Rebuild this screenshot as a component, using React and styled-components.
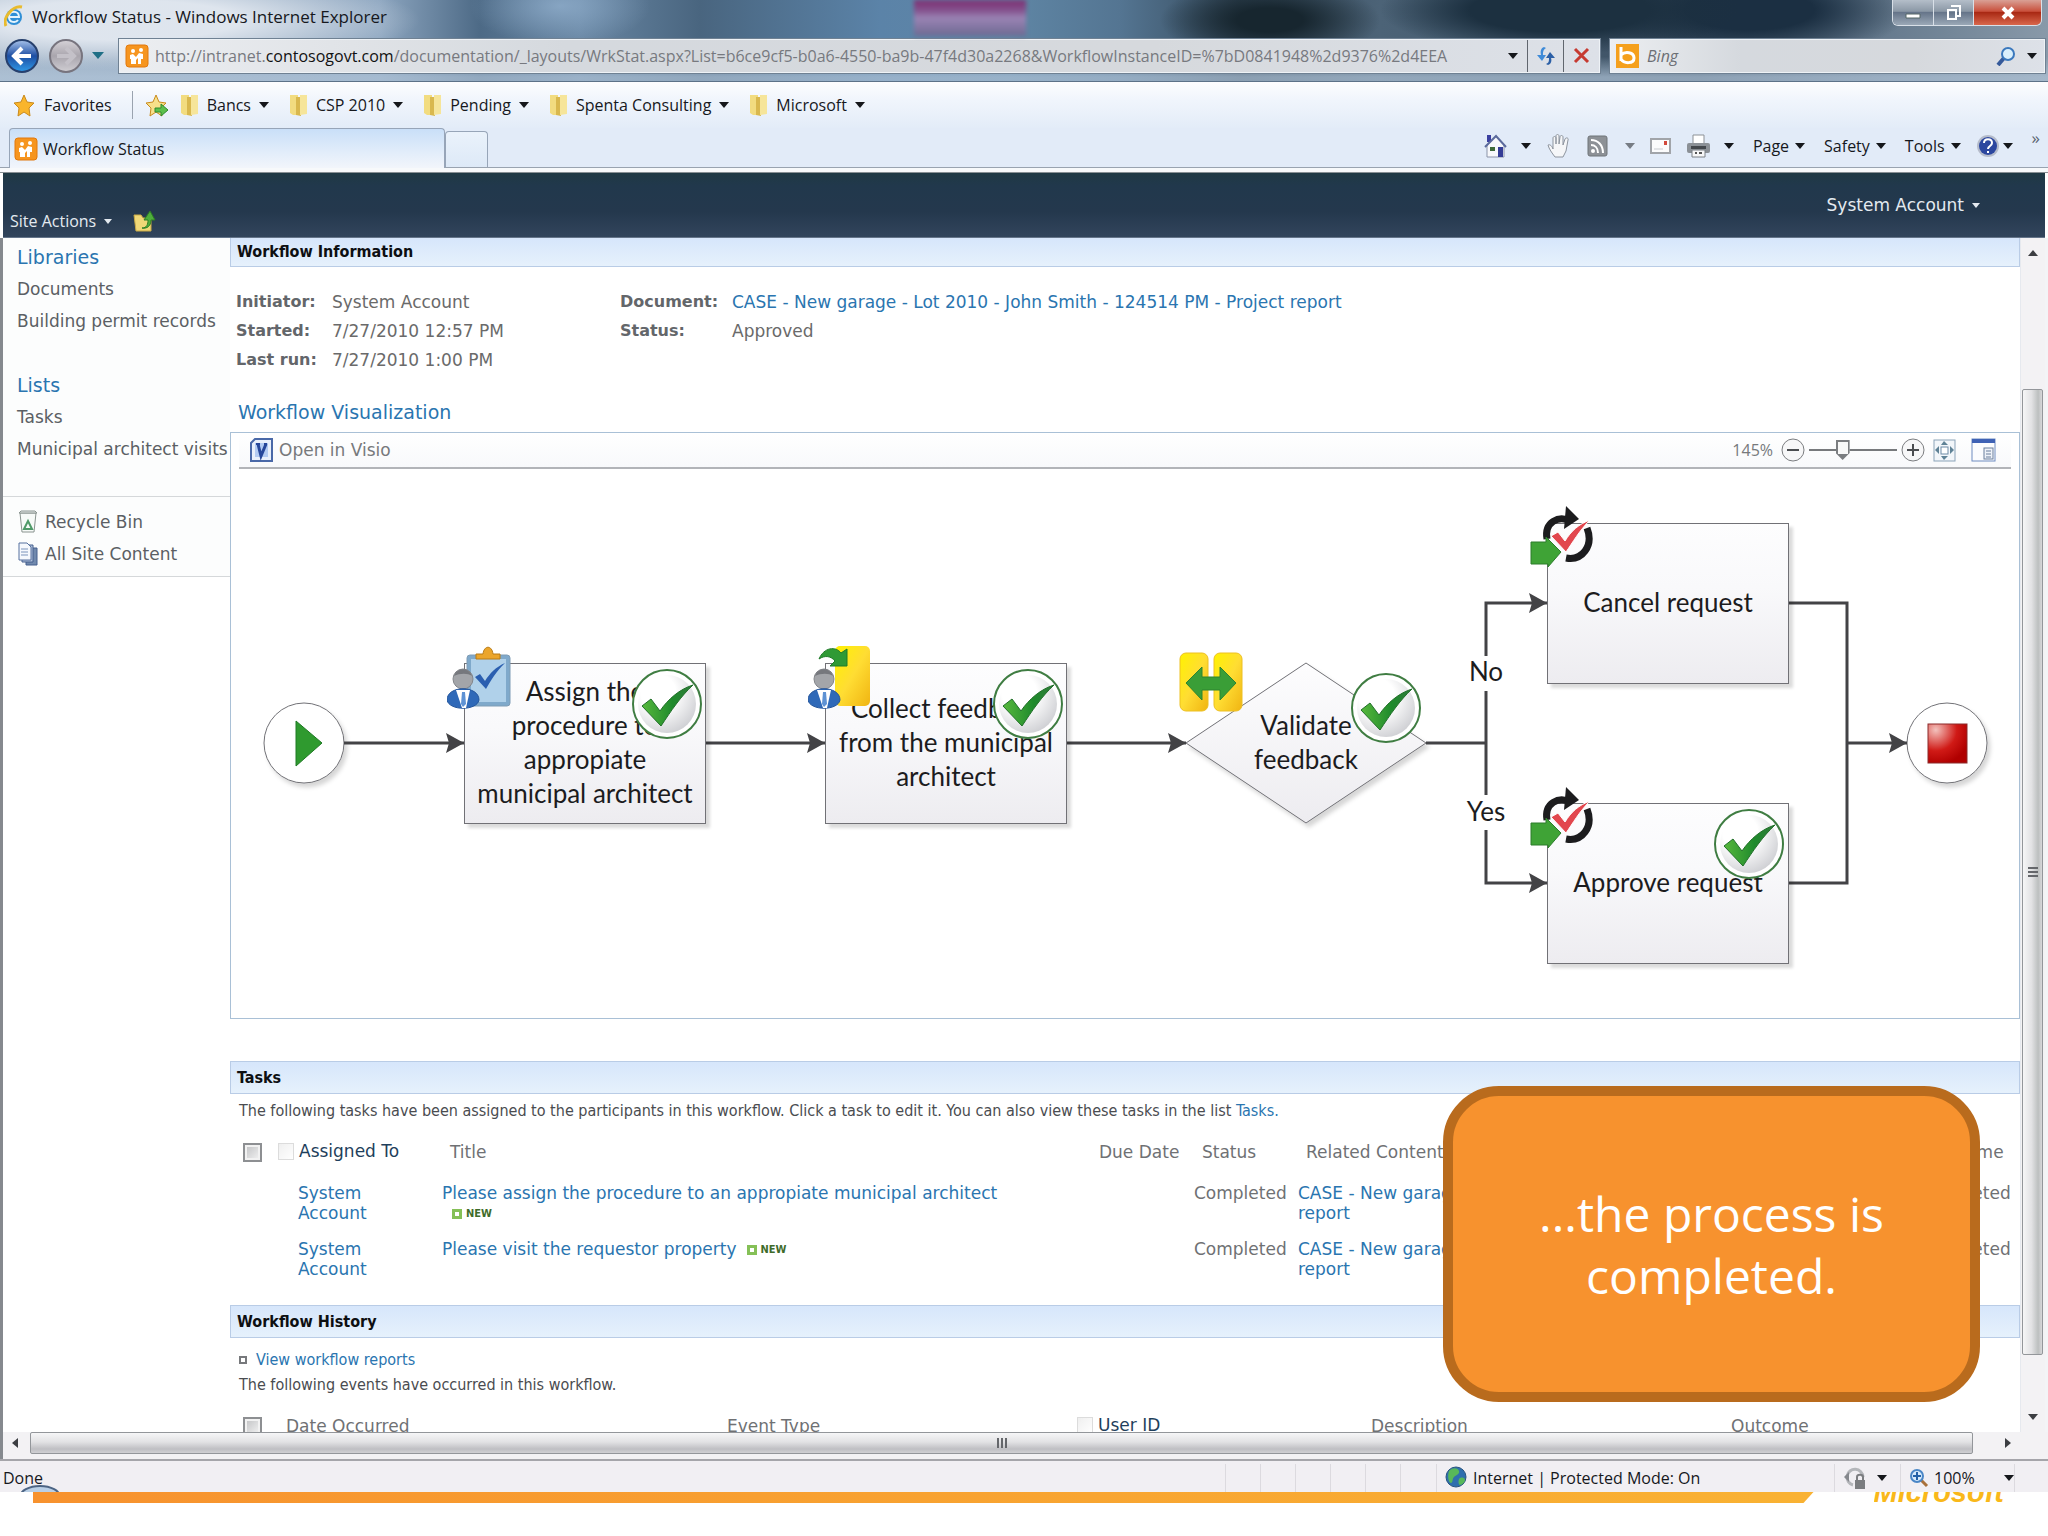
import React from 'react'
import styled, { createGlobalStyle } from 'styled-components'

const ui = '"Open Sans", "Noto Sans", sans-serif'
const page = '"DejaVu Sans", sans-serif'
const narrow = '"DejaVu Sans Condensed", "DejaVu Sans", sans-serif'

const GlobalStyle = createGlobalStyle`
*, *::before {
  box-sizing: border-box;
}
body {
  margin: 0;
  background: #fff;
}
button, input {
  font: inherit;
  color: inherit;
  margin: 0;
}
button {
  border: 0;
  padding: 0;
  background: none;
}
a {
  color: #2a75b0;
  text-decoration: none;
}
svg {
  display: block;
  flex: none;
}
`

const Screen = styled.div`
position: relative;
display: flex;
flex-direction: column;
height: 100vh;
min-width: 1600px;
overflow: hidden;
font-family: ${ui};
font-size: 16px;
color: #16181d;
white-space: nowrap;
`

/* ---------- window chrome ---------- */

const Glass = styled.div`
background:
  linear-gradient(rgba(255, 255, 255, 0) 70%, rgba(176, 196, 216, 0.7) 95%),
  radial-gradient(ellipse 300px 50px at 120px 20px, rgba(226, 232, 240, 0.95) 40%, rgba(190, 205, 222, 0) 100%),
  radial-gradient(ellipse 90px 40px at 560px 6px, rgba(150, 180, 210, 0.7), rgba(150, 180, 210, 0)),
  radial-gradient(ellipse 110px 40px at 1270px 20px, #17262f 30%, rgba(23, 38, 47, 0)),
  radial-gradient(ellipse 180px 44px at 1560px 10px, #1c3040 50%, rgba(28, 48, 64, 0)),
  radial-gradient(ellipse 160px 50px at 1750px 10px, #1b2f42 40%, rgba(27, 47, 66, 0)),
  linear-gradient(90deg, #a3b5c8, #8ca5bf 380px, #4d6a86 480px, #6886a3 580px, #49657f 700px, #5b83a8 880px, #5f86a5 1010px, #547592 1120px, #35495a 1240px, #4c6377 1380px, #3c5063 1700px, #5f7488 1850px, #8899a9);
border-bottom: 1px solid #5d7288;
`

const TitleBar = styled.header`
display: flex;
align-items: center;
gap: 8px;
height: 38px;
padding-left: 4px;
padding-bottom: 6px;
font-size: 17px;
`

const PurpleGhost = styled.span`
align-self: flex-start;
width: 112px;
height: 36px;
margin-left: auto;
margin-right: 42%;
background: linear-gradient(#7d2f72, #83508c 28%, #9a83b4 50%, #6d6a92);
filter: blur(2px);
`

const WindowButtons = styled.div`
align-self: flex-start;
display: flex;
margin-right: 6px;
border: 1px solid #d9e0e8;
border-top: 0;
border-radius: 0 0 6px 6px;
overflow: hidden;
`

const WindowButton = styled.button`
display: flex;
align-items: center;
justify-content: center;
width: ${p => (p.$close ? 68 : 40)}px;
height: 25px;
border-left: ${p => (p.$first ? 0 : 1)}px solid #d9e0e8;
background: ${p => p.$close
    ? 'linear-gradient(#d9a095, #c9503c 45%, #a92914 50%, #d8674c)'
    : 'linear-gradient(#b4bec9, #8b98a6 45%, #66758a 50%, #9aa8b6)'};
`

const AddressRow = styled.div`
display: flex;
align-items: center;
height: 43px;
padding: 0 3px 8px 4px;
`

const NavButtons = styled.div`
display: flex;
align-items: center;
gap: 8px;
width: 115px;
`

const FieldBox = styled.div`
display: flex;
align-items: center;
flex: ${p => p.$grow ? '1' : 'none'};
width: ${p => p.$grow ? 'auto' : '435px'};
height: 34px;
margin-right: ${p => p.$grow ? 10 : 0}px;
border: 1px solid #eef2f6;
outline: 1px solid #6f8193;
background: linear-gradient(90deg, #eceef1, #d5d9de 30%, #d6d9dd 70%, #dde1e8);
min-width: 0;
`

const AddressText = styled.div`
flex: 1;
min-width: 0;
overflow: hidden;
padding-left: 6px;
font-size: 16px;
line-height: 30px;
color: #77797f;
outline: 0;
b {
  font-weight: 400;
  color: #111;
}
`

const FieldIcon = styled.span`
padding-left: 5px;
`

const FieldButton = styled.button`
display: flex;
align-items: center;
justify-content: center;
width: ${p => p.$width || 36}px;
height: 32px;
border-left: ${p => (p.$line ? 1 : 0)}px solid #60666e;
`

const SearchInput = styled.input`
flex: 1;
min-width: 0;
border: 0;
outline: 0;
padding: 0 8px;
background: none;
font-style: italic;
&::placeholder {
  color: #6c6f75;
  opacity: 1;
}
`

const Caret = styled.span`
display: inline-block;
flex: none;
width: 0;
height: 0;
border: ${p => p.$size || 5}px solid transparent;
border-top: ${p => (p.$size || 5) + 1}px solid ${p => p.$color || '#15171b'};
border-bottom: 0;
`

const FavoritesBar = styled.nav`
display: flex;
align-items: center;
height: 46px;
padding-left: 12px;
background: linear-gradient(#fdfdfe, #f0f5fc 40%, #e3ecf8);
`

const FavButton = styled.button`
display: flex;
align-items: center;
gap: 8px;
margin-right: 20px;
`

const Divider = styled.span`
width: 1px;
height: 28px;
margin-right: 11px;
background: #9aa3af;
`

const AddFavorite = styled.button`
margin-right: 12px;
`

const TabRow = styled.div`
display: flex;
align-items: flex-end;
height: 40px;
padding-left: 9px;
background: #e2ebf8;
border-bottom: 1px solid #99a3b0;
`

const Tab = styled.button`
display: flex;
align-items: center;
gap: 5px;
width: 436px;
height: 40px;
margin-bottom: -1px;
padding-left: 4px;
border: 1px solid #97a5b8;
border-bottom: 0;
border-radius: 4px 4px 0 0;
background: linear-gradient(#c9dff8, #e2edfa 60%, #f2f5fb);
`

const NewTab = styled.button`
width: 43px;
height: 36px;
border: 1px solid #97a5b8;
border-bottom: 0;
border-radius: 4px 4px 0 0;
background: linear-gradient(#eaf2fb, #dde9f7);
`

const CommandBar = styled.div`
display: flex;
align-items: center;
gap: 15px;
height: 40px;
margin-left: auto;
padding-right: 8px;
padding-bottom: 3px;
`

const Command = styled.button`
display: flex;
align-items: center;
gap: ${p => p.$gap || 6}px;
margin-left: ${p => (p.$text ? 4 : 0)}px;
`

const More = styled.button`
align-self: flex-start;
margin-left: 4px;
font-size: 17px;
line-height: 22px;
color: #5a6470;
`

const Strip = styled.div`
height: 5px;
background: #f7f9fb;
border-bottom: 1px solid #888f94;
`

/* ---------- site ---------- */

const SiteHeader = styled.header`
display: flex;
justify-content: space-between;
height: 65px;
margin: 0 3px;
background: linear-gradient(#1f3944, #21384c 20%, #24384d 60%, #32455c);
border-bottom: 1px solid #65758a;
color: #e4eaf0;
`

const SiteActions = styled.div`
display: flex;
align-items: center;
align-self: flex-end;
gap: 20px;
padding: 0 0 5px 7px;
`

const HeaderButton = styled.button`
display: flex;
align-items: center;
gap: 8px;
font-family: ${p => (p.$page ? page : ui)};
font-size: ${p => (p.$page ? 17 : 16)}px;
margin-right: ${p => (p.$page ? 65 : 0)}px;
`

const Body = styled.div`
display: flex;
flex: 1;
min-height: 0;
border-left: 3px solid #85898e;
border-right: 3px solid #f3f4f6;
font-family: ${page};
font-size: 17px;
`

const SideNav = styled.nav`
flex: none;
width: 227px;
color: #5b5f64;
line-height: 32px;
a {
  display: flex;
  align-items: center;
  gap: 6px;
  color: inherit;
}
`

const NavGroup = styled.ul`
margin: 0;
padding: ${p => p.$top || 0}px 0 ${p => p.$bottom}px 14px;
list-style: none;
border-bottom: ${p => (p.$line ? 1 : 0)}px solid #d5d8da;
background: #fcfdfd;
`

const NavHeading = styled.li`
font-size: 19px;
a {
  color: #2a75b0;
}
`

const Main = styled.main`
flex: 1;
min-width: 0;
overflow: hidden;
`

const SectionBar = styled.h2`
margin: 0;
height: ${p => (p.$top ? 29 : 33)}px;
padding-left: 6px;
border: 1px solid #b9cce6;
border-top-width: ${p => (p.$top ? 0 : 1)}px;
background: linear-gradient(#d6e6fb, #e6f1fc);
font-family: ${narrow};
font-size: 16px;
line-height: ${p => (p.$top ? 27 : 32)}px;
color: #0d0f12;
`

const Facts = styled.div`
display: grid;
grid-template-columns: 96px 288px 112px 1fr;
grid-auto-rows: 29px;
align-items: center;
padding: 20px 0 25px 6px;
color: #6a6a6a;
b {
  font-size: 16px;
  color: #63666a;
}
`

const VizTitle = styled.h3`
margin: 0;
padding-left: 8px;
height: 33px;
font-size: 19px;
font-weight: 400;
line-height: 26px;
color: #2a75b0;
`

const VizPanel = styled.section`
height: 587px;
margin-bottom: 42px;
border: 1px solid #a9c0d6;
`

const VizBar = styled.div`
display: flex;
align-items: center;
height: 36px;
margin: 0 8px;
padding: 0 15px 0 11px;
border-bottom: 2px solid #b2b4b8;
background: linear-gradient(#fff, #f8f9fb);
color: #77797c;
`

const VisioLink = styled.a`
display: flex;
align-items: center;
gap: 6px;
margin-right: auto;
color: inherit;
`

const ZoomText = styled.label`
margin-right: 8px;
font-family: ${ui};
font-size: 16px;
`

const IconButton = styled.button`
margin-left: ${p => p.$left || 0}px;
`

const ZoomSlider = styled.input`
appearance: none;
width: 88px;
height: 24px;
margin: 0 4px;
background: linear-gradient(#77797c, #77797c) center / 100% 2px no-repeat;
&::-webkit-slider-thumb {
  appearance: none;
  width: 14px;
  height: 20px;
  border: 2px solid #7b7d80;
  border-bottom-width: 6px;
  background: #f8f8f8;
  clip-path: polygon(0 0, 100% 0, 100% 65%, 50% 100%, 0 65%);
}
`

/* the diagram is a free canvas: every node has its own x and y */
const Canvas = styled.div`
position: relative;
width: 1787px;
height: 548px;
font-family: Lato, sans-serif;
font-size: 26px;
line-height: 34px;
color: #1c1c1e;
text-align: center;
white-space: pre-line;
`

const Lines = styled.svg`
position: absolute;
left: 0;
top: 0;
`

const Node = styled.div`
position: absolute;
left: ${p => p.$x}px;
top: ${p => p.$y}px;
display: flex;
align-items: center;
justify-content: center;
width: 242px;
height: 161px;
padding-bottom: 4px;
border: ${p => (p.$plain ? 0 : 1)}px solid #717176;
background: ${p => (p.$plain ? 'none' : 'linear-gradient(#fdfdfe, #f9f9fb 40%, #edecf0)')};
box-shadow: ${p => (p.$plain ? 'none' : '4px 4px 3px rgba(0, 0, 0, 0.14)')};
`

const Pin = styled.div`
position: absolute;
left: ${p => p.$x}px;
top: ${p => p.$y}px;
`

const BranchLabel = styled.div`
position: absolute;
left: ${p => p.$x}px;
top: ${p => p.$y}px;
width: 60px;
`

const Note = styled.p`
margin: 0;
padding: 0 0 ${p => (p.$tight ? 4 : 0)}px 9px;
font-family: ${narrow};
font-size: 16px;
line-height: ${p => (p.$tight ? 26 : 34)}px;
color: #4a4c50;
`

const Table = styled.table`
width: 100%;
table-layout: fixed;
border-collapse: collapse;
color: #6f7174;
line-height: 20px;
text-align: left;
th {
  height: 48px;
  padding: 0 0 0 8px;
  font-weight: 400;
  vertical-align: middle;
}
td {
  height: 56px;
  padding: 7px 0 0;
  vertical-align: top;
}
`

const TaskTable = styled(Table)`
margin-bottom: 17px;
`

const PersonHead = styled.span`
display: flex;
align-items: center;
gap: 5px;
margin-left: -8px;
padding-bottom: 2px;
color: #1f3f5c;
`

const Ghost = styled.span`
width: 16px;
height: 17px;
border: 1px solid #dcdcdc;
background: linear-gradient(135deg, #efefef, #fff);
`

const Person = styled.a`
display: block;
width: 80px;
margin-left: 20px;
white-space: normal;
`

const Related = styled.a`
display: block;
padding-right: 26px;
white-space: normal;
`

const Tick = styled.input`
appearance: none;
display: block;
width: 19px;
height: 19px;
margin: 0 0 0 5px;
border: 2px solid #8d8f92;
background: linear-gradient(135deg, #bfc0c2, #f4f4f4);
box-shadow: inset 0 0 0 2px #f2f2f2;
`

const NewFlag = styled.span`
display: inline-flex;
align-items: center;
gap: 4px;
margin-left: 10px;
font-family: ${narrow};
font-size: 11px;
font-weight: 700;
line-height: 16px;
color: #3f6b2a;
&::before {
  content: '';
  width: 10px;
  height: 10px;
  border: 3px solid #85c057;
  background: #fff;
}
`

const Reports = styled.a`
display: flex;
align-items: center;
gap: 9px;
padding: 10px 0 0 9px;
font-family: ${narrow};
font-size: 16px;
line-height: 24px;
&::before {
  content: '';
  width: 8px;
  height: 8px;
  border: 2px solid #77797c;
}
`

/* ---------- scroll bars and status ---------- */

const VScroll = styled.div`
display: flex;
flex-direction: column;
align-items: center;
width: 25px;
padding: 12px 2px 12px 1px;
background: #f3f2f4;
border-left: 1px solid #e6e9ee;
`

const VThumb = styled.div`
display: flex;
align-items: center;
justify-content: center;
width: 21px;
height: 966px;
margin: 133px 0 auto;
border: 1px solid #93969a;
border-radius: 2px;
background: linear-gradient(90deg, #f6f6f7, #e2e2e4 45%, #bcbfbf 80%, #d8d8da);
`

const HScroll = styled.div`
display: flex;
align-items: center;
height: 27px;
padding: 0 37px 5px 9px;
border-left: 3px solid #85898e;
background: #f3f2f4;
`

const HThumb = styled.div`
display: flex;
align-items: center;
justify-content: center;
flex: 1;
height: 22px;
margin: 0 32px 0 12px;
border: 1px solid #93969a;
border-radius: 2px;
background: linear-gradient(#f6f6f7, #e2e2e4 45%, #bfbfc3 80%, #d0d0d3);
`

const Arrow = styled.button`
flex: none;
width: 0;
height: 0;
border: 5px solid transparent;
border-${p => p.$side}: 6px solid #3c3e42;
border-${p => ({ top: 'bottom', bottom: 'top', left: 'right', right: 'left' }[p.$side])}: 0;
`

const StatusBar = styled.footer`
position: relative;
display: flex;
align-items: center;
height: 33px;
padding: 2px 0 0 3px;
border-top: 2px solid #a5a5aa;
background: #f1eff3;
`

const StatusCell = styled.span`
display: flex;
align-items: center;
gap: ${p => p.$gap || 5}px;
width: ${p => p.$width}px;
height: 28px;
padding-left: 8px;
border-left: 1px solid #dcdadf;
`

const StatusText = styled.span`
flex: 1;
`

const ZoomLevel = styled.span`
flex: 1;
`

const OrbEdge = styled.svg`
position: absolute;
left: 21px;
bottom: 0;
`

const SlideFoot = styled.div`
display: flex;
align-items: flex-start;
height: 44px;
padding: 0 44px 0 33px;
background: #fff;
`

const OrangeRule = styled.div`
flex: 1;
height: 11px;
margin-right: 60px;
background: linear-gradient(90deg, #f7922e, #f9b233);
clip-path: polygon(0 0, 100% 0, calc(100% - 10px) 100%, 0 100%);
`

const Brand = styled.span`
display: flex;
align-items: flex-end;
height: 11px;
overflow: hidden;
font-family: "Liberation Sans", sans-serif;
font-size: 29px;
font-style: italic;
font-weight: 700;
line-height: 22px;
color: #f9b81a;
`

const Callout = styled.aside`
position: absolute;
right: 68px;
bottom: 134px;
display: flex;
align-items: center;
justify-content: center;
width: 537px;
height: 316px;
padding-top: 2px;
border: 10px solid #b96b1d;
border-radius: 56px;
background: #f7922e;
font-size: 48px;
line-height: 62px;
color: #fff;
text-align: center;
white-space: pre-line;
`

/* ---------- icons ---------- */

const IeIcon = () => (
  <svg width="20" height="24" viewBox="0 0 20 24">
    <circle cx="10" cy="13" r="8" fill="#2f8fd6" />
    <path d="M5 13h10c0-7-10-7-10 0c0 6 7 6 9 3" fill="none" stroke="#e4f4fd" strokeWidth="2" />
    <path d="M2 22C-2 14 9 1 18 3" fill="none" stroke="#e8bb2e" strokeWidth="3" />
  </svg>
)

const SiteIcon = () => (
  <svg width="24" height="24" viewBox="0 0 24 24">
    <rect x="1" y="1" width="22" height="22" rx="3" fill="#f6951f" stroke="#e2790c" />
    <g fill="#fff">
      <circle cx="8" cy="7" r="2" />
      <circle cx="16" cy="6" r="2" />
      <path d="M5 11l3-1 3 3 3-4 4 1v5l-2 0v5h-3v-6l-2 2v4H6v-5H5z" />
    </g>
  </svg>
)

const RoundArrow = ({ back }) => (
  <svg width="36" height="36" viewBox="0 0 36 36">
    <defs>
      <linearGradient id={back ? 'bk' : 'fw'} x1="0" y1="0" x2="0" y2="1">
        <stop offset="0" stopColor={back ? '#a9c4ec' : '#d6d3d8'} />
        <stop offset="0.5" stopColor={back ? '#1d4ea3' : '#a9a5ad'} />
        <stop offset="1" stopColor={back ? '#2f9be8' : '#d0ced3'} />
      </linearGradient>
    </defs>
    <circle cx="18" cy="18" r="16" fill={`url(#${back ? 'bk' : 'fw'})`} stroke={back ? '#27406d' : '#77747e'} strokeWidth="2" />
    <path
      d={back ? 'M27 18H11M18 10l-8 8 8 8' : 'M9 18h16M18 10l8 8-8 8'}
      fill="none"
      stroke={back ? '#fff' : '#c4c1c8'}
      strokeWidth="4"
    />
  </svg>
)

const Star = ({ add }) => (
  <svg width="24" height="24" viewBox="0 0 24 24">
    <path d="M12 2l3 7 7 1-5 5 1 8-6-4-6 4 1-8-5-5 7-1z" fill={add ? '#f7e08a' : '#f9b52c'} stroke="#c98a1c" />
    {add && <path d="M11 15h6v-4l7 6-7 6v-4h-6z" fill="#5cc04c" stroke="#2e8a2c" />}
  </svg>
)

const Folder = () => (
  <svg width="19" height="24" viewBox="0 0 19 24">
    <path d="M1 2h8v20H4l-3-2z" fill="#f2dc80" />
    <path d="M7 4h5v19l-5-1z" fill="#d9b84e" />
    <path d="M11 2h7v19l-7 1z" fill="#f6e59a" />
  </svg>
)

const HomeIcon = () => (
  <svg width="25" height="26" viewBox="0 0 25 26">
    <path d="M4 2h4v7H4z" fill="#3a3fa0" />
    <path d="M4 12l9-9 8 9v12H4z" fill="#f7f8fb" stroke="#8b93a8" />
    <path d="M2 14L13 3l10 11" fill="none" stroke="#5b6a9c" strokeWidth="2" />
    <path d="M7 14h5v4H7z" fill="#3f6a3a" />
    <path d="M15 14h5v10h-5z" fill="#343c96" />
  </svg>
)

const HandIcon = () => (
  <svg width="26" height="26" viewBox="0 0 26 26">
    <path d="M9 24C6 20 3 16 2 12c2-1 4 1 5 4V5c0-2 3-2 3 0v6V3c0-2 3-2 3 0v8l1-7c0-2 3-2 3 0v8l2-6c1-2 4-1 3 1l-2 11-3 6z" fill="#f5f6f8" stroke="#8d949e" />
  </svg>
)

const FeedIcon = () => (
  <svg width="21" height="22" viewBox="0 0 21 22">
    <rect x="1" y="1" width="19" height="20" rx="2" fill="#8d9196" stroke="#6f7479" />
    <circle cx="6" cy="16" r="2" fill="#fff" />
    <path d="M4 10c4 0 7 3 7 8M4 5c7 0 12 5 12 13" fill="none" stroke="#fff" strokeWidth="2" />
  </svg>
)

const MailIcon = () => (
  <svg width="21" height="16" viewBox="0 0 21 16">
    <rect x="1" y="1" width="19" height="14" fill="#fbfbfc" stroke="#a1a4a9" strokeWidth="2" />
    <path d="M14 3h3v4h-3z" fill="#d2493d" />
    <path d="M4 11h9" stroke="#c9ccd1" />
  </svg>
)

const PrinterIcon = () => (
  <svg width="25" height="24" viewBox="0 0 25 24">
    <path d="M7 1h11v9H7z" fill="#fff" stroke="#8d9196" />
    <rect x="1" y="9" width="23" height="10" rx="2" fill="#8b9096" />
    <path d="M5 12h15v3H5z" fill="#43474c" />
    <path d="M6 16h13v7H6z" fill="#f7f7f8" stroke="#7b8086" />
    <path d="M9 19h2M13 19h3" stroke="#555" strokeWidth="2" />
  </svg>
)

const HelpIcon = () => (
  <svg width="24" height="24" viewBox="0 0 24 24">
    <circle cx="12" cy="12" r="11" fill="#b5bccb" />
    <circle cx="12" cy="12" r="9" fill="#2c479f" />
    <path d="M8 9c0-5 8-5 8 0 0 3-4 3-4 6M12 17v2" fill="none" stroke="#fff" strokeWidth="2" />
  </svg>
)

const RefreshIcon = () => (
  <svg width="22" height="22" viewBox="0 0 22 22">
    <path d="M9 2C6 3 5 6 6 10H2l5 6 4-6H8c0-3 0-5 3-7z" fill="#3f8bd8" />
    <path d="M13 20c3-1 4-4 3-7h4l-5-6-4 6h3c0 3 0 5-3 6z" fill="#2b5fa6" />
  </svg>
)

const StopIcon = () => (
  <svg width="17" height="17" viewBox="0 0 17 17">
    <path d="M2 2l13 13M15 2L2 15" stroke="#c63a31" strokeWidth="3" />
  </svg>
)

const BingIcon = () => (
  <svg width="23" height="24" viewBox="0 0 23 24">
    <rect width="23" height="24" fill="#f5a01c" />
    <path d="M5 3v14M5 11c4-4 13-3 13 3s-10 6-13 1" fill="none" stroke="#fff" strokeWidth="3" />
  </svg>
)

const SearchIcon = ({ plus }) => (
  <svg width="20" height="20" viewBox="0 0 20 20">
    {plus
      ? <>
          <path d="M12 12l6 6" stroke="#a9713a" strokeWidth="3" />
          <circle cx="8" cy="8" r="6" fill="#d6eafc" stroke="#4a86c6" strokeWidth="2" />
          <path d="M8 4v8M4 8h8" stroke="#2461a8" strokeWidth="2" />
        </>
      : <>
          <path d="M8 12l-6 7" stroke="#35599a" strokeWidth="4" />
          <circle cx="12" cy="8" r="6" fill="#d9effc" stroke="#3a78bd" strokeWidth="2" />
        </>}
  </svg>
)

const UpFolderIcon = () => (
  <svg width="24" height="22" viewBox="0 0 24 22">
    <path d="M2 5h7l2 3h8v13H4z" fill="#f0d877" stroke="#c9a944" />
    <path d="M10 18c5 0 6-4 6-8h-4l6-9 5 9h-4c0 6-4 9-9 8z" fill="#4fae3b" stroke="#2d7d24" />
  </svg>
)

const BinIcon = () => (
  <svg width="22" height="24" viewBox="-1 0 22 24">
    <path d="M2 3l16 0-2 19H4z" fill="#f7faf8" stroke="#8a9490" />
    <path d="M1 3l2-2h14l2 2z" fill="#e5e9e8" stroke="#8a9490" />
    <path d="M10 11l4 8H6z" fill="none" stroke="#4f9a68" strokeWidth="2" />
  </svg>
)

const PagesIcon = () => (
  <svg width="22" height="24" viewBox="-1 0 22 24">
    <path d="M8 6h11v17H8z" fill="#7089ad" stroke="#445f8d" />
    <path d="M4 3h11v17H4z" fill="#aebfd9" stroke="#445f8d" />
    <path d="M1 1h8l4 4v13H1z" fill="#f5f8fd" stroke="#56719f" />
    <path d="M3 7h7M3 10h7M3 13h7" stroke="#7b93bb" />
  </svg>
)

const VisioIcon = () => (
  <svg width="23" height="24" viewBox="0 0 23 24">
    <path d="M5 1h17v22H1V5z" fill="#e9f0fb" stroke="#4a69a8" strokeWidth="2" />
    <path d="M5 5h13v14H5z" fill="#b3cbf2" />
    <path d="M6 6h4M14 6h3" stroke="#26479a" strokeWidth="2" />
    <path d="M8 6l3 12 5-12" fill="none" stroke="#26479a" strokeWidth="3" />
  </svg>
)

const RoundSign = ({ plus }) => (
  <svg width="24" height="24" viewBox="0 0 24 24">
    <circle cx="12" cy="12" r="11" fill="#f7f7f8" stroke="#7b7d80" />
    <path d={plus ? 'M6 12h12M12 6v12' : 'M6 12h12'} stroke="#4b4d50" strokeWidth="2" />
  </svg>
)

const FitIcon = () => (
  <svg width="23" height="23" viewBox="0 0 23 23">
    <rect x="1" y="1" width="21" height="21" fill="#f2f6fa" stroke="#8ba3b8" />
    <rect x="8" y="8" width="7" height="7" fill="#fff" stroke="#6c8aa5" />
    <path d="M11 2l4 4H8zM11 21l4-4H8zM2 11l4-4v8zM21 11l-4-4v8z" fill="#5f8296" />
  </svg>
)

const PaneIcon = () => (
  <svg width="25" height="24" viewBox="0 0 25 24">
    <rect x="1" y="1" width="23" height="22" fill="#fbfcfe" stroke="#6f8cc0" />
    <path d="M1 1h23v4H1z" fill="#3f62b5" />
    <rect x="13" y="10" width="9" height="11" fill="#eef2f8" stroke="#6b7f9c" />
    <path d="M15 13h5M15 16h5M15 19h5" stroke="#6b7f9c" />
  </svg>
)

const DoneBadge = () => (
  <svg width="70" height="70" viewBox="0 0 70 70">
    <defs>
      <radialGradient id="ball" cx="0.35" cy="0.3" r="0.75">
        <stop offset="0.4" stopColor="#fff" />
        <stop offset="1" stopColor="#cfd0d4" />
      </radialGradient>
      <linearGradient id="leaf" x1="0" y1="0" x2="1" y2="0">
        <stop offset="0" stopColor="#57b83c" />
        <stop offset="0.6" stopColor="#1f8a2c" />
        <stop offset="1" stopColor="#2f7a3a" />
      </linearGradient>
    </defs>
    <circle cx="35" cy="35" r="34" fill="#fff" stroke="#3f7d42" strokeWidth="2" />
    <circle cx="35" cy="35" r="29" fill="url(#ball)" />
    <path d="M10 37L19 30L28 42C36 30 48 20 61 16C49 27 39 42 29 57Z" fill="url(#leaf)" stroke="#22702a" />
  </svg>
)

const Man = () => (
  <>
    <circle cx="16" cy="34" r="10" fill="#a3a5a9" stroke="#83858a" />
    <path d="M7 31c3-9 15-9 18 0-4-3-12-3-18 0z" fill="#76787d" />
    <path d="M0 55c0-15 32-15 32 0-2 11-30 11-32 0z" fill="#2f69b8" stroke="#23559c" />
    <path d="M9 45h14l-4 18h-4z" fill="#fff" />
    <path d="M15 47h3l1 12-3 3-2-3z" fill="#5e92d4" />
  </>
)

const AssignIcon = () => (
  <svg width="64" height="64" viewBox="0 0 64 64">
    <rect x="20" y="10" width="43" height="51" rx="3" fill="#7fa9cb" stroke="#7f9cb5" />
    <path d="M24 14h35v43H24z" fill="#b0d1ea" />
    <path d="M29 14v-5h7c1-9 9-9 10 0h7v5z" fill="#eba52b" stroke="#b87b16" />
    <path d="M28 32l5-3 5 7C43 28 49 22 58 18 49 27 44 35 39 44z" fill="#2b5fb0" />
    <Man />
  </svg>
)

const CollectIcon = () => (
  <svg width="64" height="64" viewBox="0 0 64 64">
    <defs>
      <linearGradient id="gold" x1="0" y1="0" x2="1" y2="1">
        <stop offset="0" stopColor="#fff200" />
        <stop offset="0.5" stopColor="#ffdd33" />
        <stop offset="1" stopColor="#f0b412" />
      </linearGradient>
    </defs>
    <rect x="27" y="1" width="35" height="60" rx="5" fill="url(#gold)" />
    <path d="M11 14C16 2 28 1 33 8l6-4v17H22l5-5c-4-5-10-6-16-2z" fill="#2f9a35" stroke="#1e7a28" />
    <Man />
  </svg>
)

const CompareIcon = () => (
  <svg width="64" height="60" viewBox="0 0 64 60">
    <rect x="1" y="1" width="28" height="58" rx="6" fill="url(#gold)" stroke="#edc022" />
    <rect x="35" y="1" width="28" height="58" rx="6" fill="url(#gold)" stroke="#edc022" />
    <path d="M7 31l16-16v10h18V15l16 16-16 17V38H23v10z" fill="#3a9e37" stroke="#2c8430" />
  </svg>
)

const DecideIcon = () => (
  <svg width="64" height="62" viewBox="0 0 64 62">
    <path d="M17 33C14 16 29 9 40 15" fill="none" stroke="#1c1c1e" strokeWidth="7" />
    <path d="M36 0l13 13-15 10z" fill="#1c1c1e" />
    <path d="M57 22C64 40 52 55 36 52" fill="none" stroke="#1c1c1e" strokeWidth="7" />
    <path d="M21 30l7-4 7 9C41 25 49 18 60 14 49 25 43 36 36 46z" fill="#e2474e" stroke="#fff" />
    <path d="M1 36h15v-5l15 15-13 15v-3H1z" fill="#3fa336" stroke="#2c7d2a" />
  </svg>
)

const GlobeIcon = () => (
  <svg width="23" height="23" viewBox="0 0 23 23">
    <circle cx="11" cy="11" r="10" fill="#2f6fae" stroke="#28547f" />
    <path d="M4 5c4-4 9-3 10 0s-3 4-5 6-1 6-3 6-4-6-2-12zM15 12c3-1 5 0 5 2s-3 5-5 5-2-6 0-7z" fill="#58b85a" />
  </svg>
)

const LockIcon = () => (
  <svg width="24" height="24" viewBox="0 0 24 24">
    <path d="M20 11A8 8 0 1 0 10 19" fill="none" stroke="#b4b6ba" strokeWidth="3" />
    <path d="M1 11l5-5v10z" fill="#85888d" />
    <rect x="12" y="14" width="10" height="9" fill="#7b7d80" />
    <path d="M14 14v-3c0-3 6-3 6 0v3" fill="none" stroke="#7b7d80" strokeWidth="2" />
  </svg>
)

const Grip = ({ vertical }) => (
  <svg width="12" height="12" viewBox="0 0 12 12">
    <path d={vertical ? 'M1 2h10M1 6h10M1 10h10' : 'M2 1v10M6 1v10M10 1v10'} stroke="#65676b" strokeWidth="2" />
  </svg>
)

const FlowLines = () => (
  <Lines width="1787" height="548" viewBox="0 0 1787 548">
    <defs>
      <marker id="tip" markerUnits="userSpaceOnUse" markerWidth="20" markerHeight="20" refX="18" refY="10" orient="auto">
        <path d="M0 0L18 10L0 20L3 10Z" fill="#434346" />
      </marker>
      <linearGradient id="pane" x1="0" y1="0" x2="0" y2="1">
        <stop offset="0" stopColor="#fdfdfe" />
        <stop offset="1" stopColor="#edecf0" />
      </linearGradient>
      <radialGradient id="ruby" cx="0.2" cy="0.15" r="0.9">
        <stop offset="0" stopColor="#f3c2bd" />
        <stop offset="0.6" stopColor="#d01a16" />
        <stop offset="1" stopColor="#b00000" />
      </radialGradient>
      <filter id="soft">
        <feDropShadow dx="3" dy="4" stdDeviation="2" floodOpacity="0.16" />
      </filter>
    </defs>
    <g filter="url(#soft)" stroke="#717176">
      <circle cx="73" cy="274" r="40" fill="#fff" />
      <circle cx="1716" cy="274" r="40" fill="#fff" />
      <path d="M955 274L1075 194L1195 274L1075 354Z" fill="url(#pane)" />
    </g>
    <path d="M65 252L91 274L65 297Z" fill="#2f9a2f" stroke="#1f7a24" />
    <rect x="1697" y="255" width="39" height="39" fill="url(#ruby)" stroke="#8b2a2a" />
    <g fill="none" stroke="#434346" strokeWidth="3">
      <path d="M113 274H233" markerEnd="url(#tip)" />
      <path d="M475 274H594" markerEnd="url(#tip)" />
      <path d="M836 274H955" markerEnd="url(#tip)" />
      <path d="M1195 274H1255" />
      <path d="M1255 187V134H1316" markerEnd="url(#tip)" />
      <path d="M1255 222V326" />
      <path d="M1255 361V414H1316" markerEnd="url(#tip)" />
      <path d="M1556 134H1616V414H1556" />
      <path d="M1616 274H1676" markerEnd="url(#tip)" />
    </g>
  </Lines>
)

/* ---------- data ---------- */

const favorites = ['Bancs', 'CSP 2010', 'Pending', 'Spenta Consulting', 'Microsoft']
const caseName = 'CASE - New garage - Lot 2010 - John Smith - 124514 PM - Project report'
const tasks = [
  { title: 'Please assign the procedure to an appropiate municipal architect', wrap: true },
  { title: 'Please visit the requestor property' },
]

const Browser = () => (
  <>
    <Glass>
      <TitleBar>
        <IeIcon />
        Workflow Status - Windows Internet Explorer
        <PurpleGhost />
        <WindowButtons>
          <WindowButton $first aria-label="Minimize">
            <svg width="16" height="16"><path d="M1 9h14v4H1z" fill="#fff" stroke="#566" /></svg>
          </WindowButton>
          <WindowButton aria-label="Restore">
            <svg width="18" height="18"><path d="M6 2h9v10h-3M3 6h8v9H3z" fill="none" stroke="#fff" strokeWidth="2" /></svg>
          </WindowButton>
          <WindowButton $close aria-label="Close">
            <svg width="16" height="16"><path d="M3 3l10 10M13 3L3 13" stroke="#fff" strokeWidth="4" /></svg>
          </WindowButton>
        </WindowButtons>
      </TitleBar>
      <AddressRow>
        <NavButtons>
          <button aria-label="Back"><RoundArrow back /></button>
          <button aria-label="Forward"><RoundArrow /></button>
          <Caret $size={6} $color="#1f6f86" />
        </NavButtons>
        <FieldBox $grow>
          <FieldIcon><SiteIcon /></FieldIcon>
          <AddressText role="textbox" aria-label="Address" contentEditable suppressContentEditableWarning>
            http://intranet.<b>contosogovt.com</b>/documentation/_layouts/WrkStat.aspx?List=b6ce9cf5-b0a6-4550-ba9b-47f4d30a2268&amp;WorkflowInstanceID=%7bD0841948%2d9376%2d4EEA
          </AddressText>
          <FieldButton $width={28} aria-label="Show addresses"><Caret /></FieldButton>
          <FieldButton $line aria-label="Refresh"><RefreshIcon /></FieldButton>
          <FieldButton $line aria-label="Stop"><StopIcon /></FieldButton>
        </FieldBox>
        <FieldBox>
          <FieldIcon><BingIcon /></FieldIcon>
          <SearchInput placeholder="Bing" aria-label="Search Bing" />
          <FieldButton $width={28} aria-label="Search"><SearchIcon /></FieldButton>
          <FieldButton $width={24} aria-label="Search options"><Caret /></FieldButton>
        </FieldBox>
      </AddressRow>
    </Glass>
    <FavoritesBar>
      <FavButton><Star />Favorites</FavButton>
      <Divider />
      <AddFavorite aria-label="Add to favorites"><Star add /></AddFavorite>
      {favorites.map(name => (
        <FavButton key={name}><Folder />{name}<Caret /></FavButton>
      ))}
    </FavoritesBar>
    <TabRow>
      <Tab><SiteIcon />Workflow Status</Tab>
      <NewTab aria-label="New tab" />
      <CommandBar>
        <Command $gap={13} aria-label="Home"><HomeIcon /><Caret /></Command>
        <Command aria-label="Pan"><HandIcon /></Command>
        <Command $gap={17} aria-label="Feeds"><FeedIcon /><Caret $color="#777c84" /></Command>
        <Command aria-label="Read mail"><MailIcon /></Command>
        <Command $gap={13} aria-label="Print"><PrinterIcon /><Caret /></Command>
        <Command $text>Page<Caret /></Command>
        <Command $text>Safety<Caret /></Command>
        <Command $text>Tools<Caret /></Command>
        <Command $gap={3} aria-label="Help"><HelpIcon /><Caret /></Command>
        <More aria-label="More commands">»</More>
      </CommandBar>
    </TabRow>
    <Strip />
  </>
)

const Diagram = () => (
  <Canvas>
    <FlowLines />
    <Node $x={233} $y={194}>{'Assign the\nprocedure to\nappropiate\nmunicipal architect'}</Node>
    <Node $x={594} $y={194}>{'Collect feedback\nfrom the municipal\narchitect'}</Node>
    <Node $x={954} $y={194} $plain>{'Validate\nfeedback'}</Node>
    <Node $x={1316} $y={54}>Cancel request</Node>
    <Node $x={1316} $y={334}>Approve request</Node>
    <BranchLabel $x={1225} $y={185}>No</BranchLabel>
    <BranchLabel $x={1225} $y={325}>Yes</BranchLabel>
    <Pin $x={216} $y={176}><AssignIcon /></Pin>
    <Pin $x={577} $y={176}><CollectIcon /></Pin>
    <Pin $x={948} $y={183}><CompareIcon /></Pin>
    <Pin $x={1299} $y={37}><DecideIcon /></Pin>
    <Pin $x={1299} $y={318}><DecideIcon /></Pin>
    <Pin $x={401} $y={200}><DoneBadge /></Pin>
    <Pin $x={762} $y={200}><DoneBadge /></Pin>
    <Pin $x={1120} $y={204}><DoneBadge /></Pin>
    <Pin $x={1483} $y={340}><DoneBadge /></Pin>
  </Canvas>
)

const Tasks = () => (
  <TaskTable>
    <colgroup>
      <col width="48" />
      <col width="164" />
      <col />
      <col width="103" />
      <col width="104" />
      <col width="620" />
      <col width="102" />
    </colgroup>
    <thead>
      <tr>
        <th><Tick type="checkbox" aria-label="Select all tasks" /></th>
        <th><PersonHead><Ghost />Assigned To</PersonHead></th>
        <th>Title</th>
        <th>Due Date</th>
        <th>Status</th>
        <th>Related Content</th>
        <th>Outcome</th>
      </tr>
    </thead>
    <tbody>
      {tasks.map(task => (
        <tr key={task.title}>
          <td />
          <td><Person href="#">System Account</Person></td>
          <td>
            <a href="#">{task.title}</a>
            {task.wrap && <br />}
            <NewFlag>NEW</NewFlag>
          </td>
          <td />
          <td>Completed</td>
          <td><Related href="#">{caseName}</Related></td>
          <td>Completed</td>
        </tr>
      ))}
    </tbody>
  </TaskTable>
)

const History = () => (
  <Table>
    <colgroup>
      <col width="48" />
      <col width="441" />
      <col width="358" />
      <col width="286" />
      <col width="360" />
      <col />
    </colgroup>
    <thead>
      <tr>
        <th><Tick type="checkbox" aria-label="Select all events" /></th>
        <th>Date Occurred</th>
        <th>Event Type</th>
        <th><PersonHead><Ghost />User ID</PersonHead></th>
        <th>Description</th>
        <th>Outcome</th>
      </tr>
    </thead>
  </Table>
)

const App = () => (
  <Screen>
    <GlobalStyle />
    <Browser />
    <SiteHeader>
      <SiteActions>
        <HeaderButton>Site Actions<Caret $size={4} $color="#e4eaf0" /></HeaderButton>
        <button aria-label="Navigate up"><UpFolderIcon /></button>
      </SiteActions>
      <HeaderButton $page>System Account<Caret $size={4} $color="#e4eaf0" /></HeaderButton>
    </SiteHeader>
    <Body>
      <SideNav>
        <NavGroup $top={3} $bottom={32}>
          <NavHeading><a href="#">Libraries</a></NavHeading>
          <li><a href="#">Documents</a></li>
          <li><a href="#">Building permit records</a></li>
        </NavGroup>
        <NavGroup $bottom={31} $line>
          <NavHeading><a href="#">Lists</a></NavHeading>
          <li><a href="#">Tasks</a></li>
          <li><a href="#">Municipal architect visits</a></li>
        </NavGroup>
        <NavGroup $top={9} $bottom={6} $line>
          <li><a href="#"><BinIcon />Recycle Bin</a></li>
          <li><a href="#"><PagesIcon />All Site Content</a></li>
        </NavGroup>
      </SideNav>
      <Main>
        <SectionBar $top>Workflow Information</SectionBar>
        <Facts>
          <b>Initiator:</b><span>System Account</span>
          <b>Document:</b><a href="#">{caseName}</a>
          <b>Started:</b><span>7/27/2010 12:57 PM</span>
          <b>Status:</b><span>Approved</span>
          <b>Last run:</b><span>7/27/2010 1:00 PM</span>
        </Facts>
        <VizTitle>Workflow Visualization</VizTitle>
        <VizPanel>
          <VizBar>
            <VisioLink href="#"><VisioIcon />Open in Visio</VisioLink>
            <ZoomText htmlFor="zoom">145%</ZoomText>
            <IconButton aria-label="Zoom out"><RoundSign /></IconButton>
            <ZoomSlider id="zoom" type="range" min="0" max="100" defaultValue="36" />
            <IconButton aria-label="Zoom in"><RoundSign plus /></IconButton>
            <IconButton $left={8} aria-label="Fit to window"><FitIcon /></IconButton>
            <IconButton $left={15} aria-label="Shape information"><PaneIcon /></IconButton>
          </VizBar>
          <Diagram />
        </VizPanel>
        <SectionBar>Tasks</SectionBar>
        <Note>
          The following tasks have been assigned to the participants in this workflow. Click a task to edit it. You can also view these tasks in the list <a href="#">Tasks.</a>
        </Note>
        <Tasks />
        <SectionBar>Workflow History</SectionBar>
        <Reports href="#">View workflow reports</Reports>
        <Note $tight>The following events have occurred in this workflow.</Note>
        <History />
      </Main>
      <VScroll>
        <Arrow $side="bottom" aria-label="Scroll up" />
        <VThumb><Grip vertical /></VThumb>
        <Arrow $side="top" aria-label="Scroll down" />
      </VScroll>
    </Body>
    <HScroll>
      <Arrow $side="right" aria-label="Scroll left" />
      <HThumb><Grip /></HThumb>
      <Arrow $side="left" aria-label="Scroll right" />
    </HScroll>
    <StatusBar>
      <OrbEdge width="38" height="7" viewBox="0 0 38 7">
        <ellipse cx="19" cy="12" rx="20" ry="11" fill="#b9cfe6" stroke="#4c6484" strokeWidth="2" />
      </OrbEdge>
      <StatusText>Done</StatusText>
      {[1, 2, 3, 4, 5].map(n => <StatusCell key={n} $width={35} />)}
      <StatusCell $width={36} />
      <StatusCell $width={398}><GlobeIcon />Internet | Protected Mode: On</StatusCell>
      <StatusCell $width={66} $gap={10}><LockIcon /><Caret /></StatusCell>
      <StatusCell $width={114}><SearchIcon plus /><ZoomLevel>100%</ZoomLevel><Caret /></StatusCell>
      <StatusCell as="i" $width={34} />
    </StatusBar>
    <SlideFoot>
      <OrangeRule />
      <Brand>Microsoft</Brand>
    </SlideFoot>
    <Callout>{'...the process is\ncompleted.'}</Callout>
  </Screen>
)

export default App
